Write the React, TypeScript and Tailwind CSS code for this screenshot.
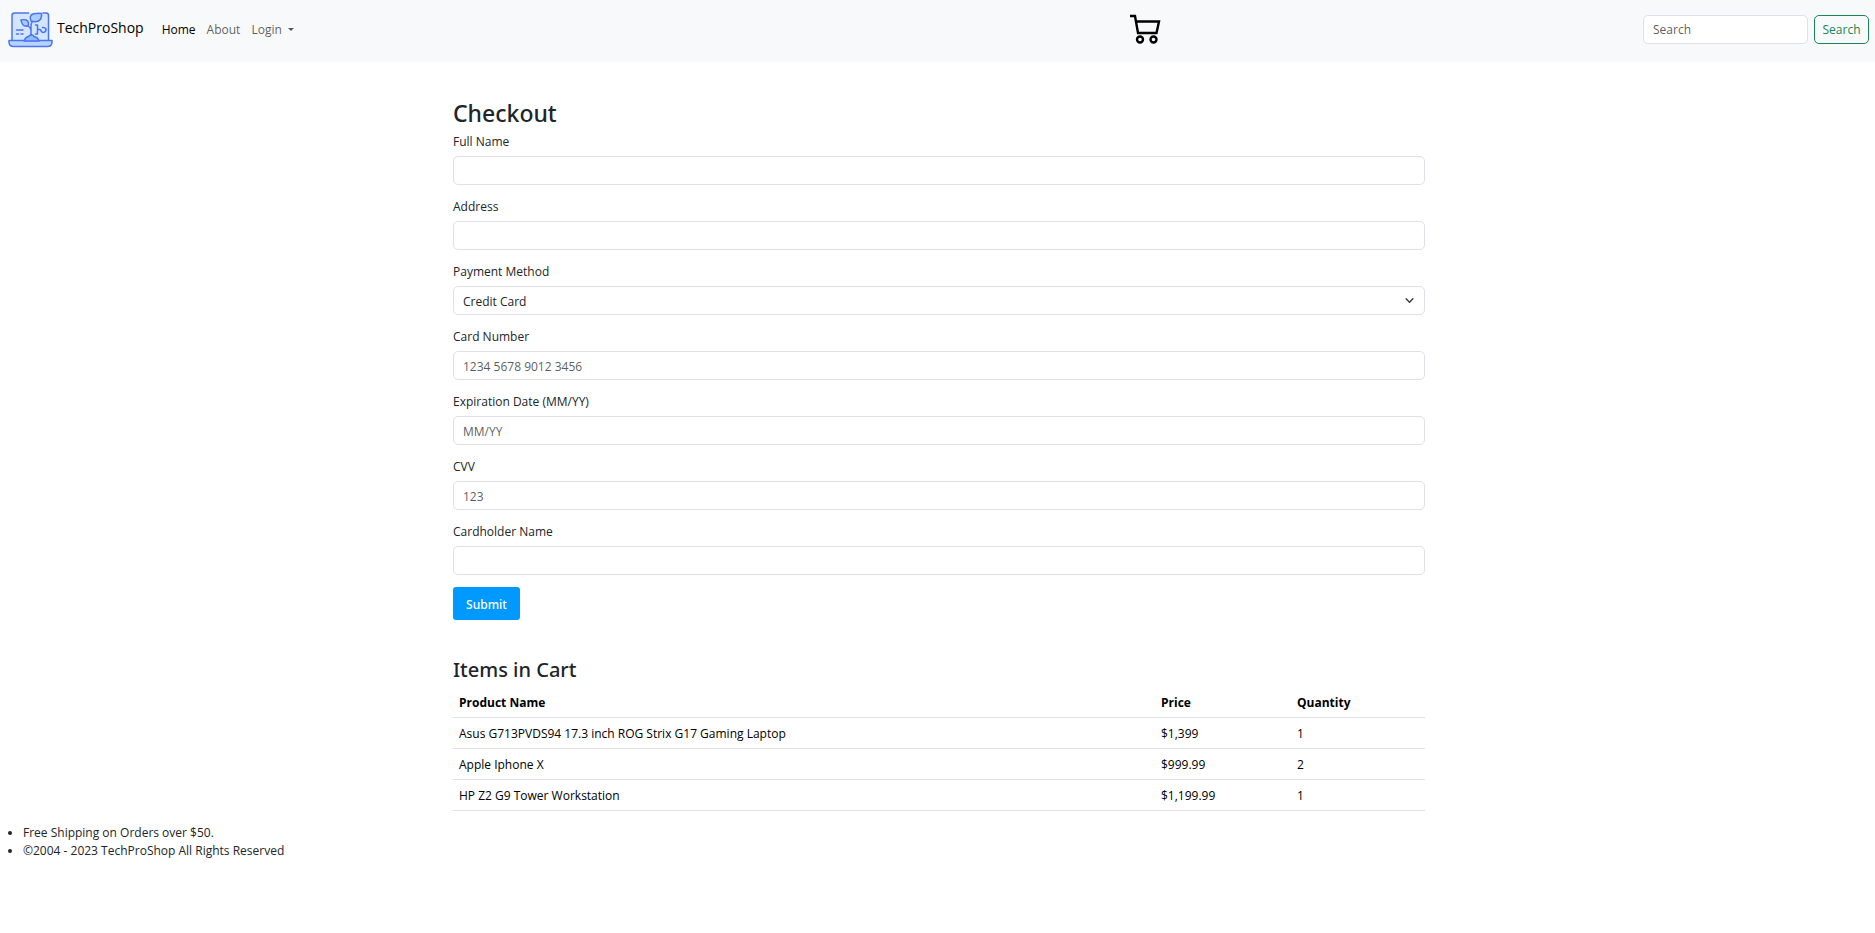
import type { InputHTMLAttributes } from "react";

const cartItems = [
  { name: "Asus G713PVDS94 17.3 inch ROG Strix G17 Gaming Laptop", price: "$1,399", quantity: 1 },
  { name: "Apple Iphone X", price: "$999.99", quantity: 2 },
  { name: "HP Z2 G9 Tower Workstation", price: "$1,199.99", quantity: 1 },
];

function Logo() {
  return (
    <svg width="45" height="36" viewBox="0 0 45 36" fill="none" stroke="#4a73f8" strokeWidth="1.5" strokeLinecap="round" strokeLinejoin="round" aria-hidden="true">
      <path d="M4 28V3.5Q4 1 6.500 1H38Q40.500 1 40.500 3.500V28Z" fill="#d4e6ff" stroke="none" />
      <path d="M1 28.500H44V30Q44 34.500 39.500 34.500H5.500Q1 34.500 1 30Z" fill="#b5d5ff" />
      <path d="M4 28V3.500Q4 1 6.500 1H20.500M35 1H38Q40.500 1 40.500 3.500V28" />
      <path d="M16 29Q17.500 25 20.500 24.500Q23.500 21 26 24.500Q29.500 25 31 29Z" fill="#8ebcff" />
      <path d="M23 23.500V14Q23 10 27 6.500M23 18Q22.500 15.500 19 13" />
      <path d="M23 9Q20.500 3 26 1.800Q30 1 33.500 1.500Q34 7 30.500 9Q27 10.500 23 9Z" fill="#a9ceff" />
      <path d="M19.500 14Q14 15 13 8Q19.500 6.500 20.500 11Q20.700 13 19.500 14Z" fill="#a9ceff" />
      <path d="M27.500 13H29.500V22H27.500M29.500 17.500H32Q33 17.500 33 19Q33.500 20.500 35.500 20.500Q38 20 38 17.500Q37.500 15 34.500 15.500" />
      <path d="M8.500 18H15M8.500 22H10.500M13 22H15" />
    </svg>
  );
}

function CartIcon() {
  return (
    <svg width="32" height="30" viewBox="0 0 32 30" fill="none" stroke="#000" strokeWidth="2.400" aria-hidden="true">
      <path d="M1 2H6L9 19H27.500L30 7.500H7" />
      <circle cx="11" cy="25.500" r="3" />
      <circle cx="24.500" cy="25.500" r="3" />
    </svg>
  );
}

function Field({ id, label, ...rest }: { id: string; label: string } & InputHTMLAttributes<HTMLInputElement>) {
  return (
    <div className="mb-[13px]">
      <label htmlFor={id} className="mb-[5px] block">{label}</label>
      <input id={id} type="text" className="block h-[29px] w-full rounded-[5px] border border-[#dee2e6] bg-white px-[9px] pt-0.5 placeholder:text-[#212529]/75" {...rest} />
    </div>
  );
}

export default function App() {
  return (
    <div className="font-['Open_Sans',sans-serif] text-[12px] leading-[18px] text-[#212529]">
      <nav className="flex h-[62px] items-center bg-[#f8f9fa] pr-1.5 pb-[3px] pl-2">
        <a href="#" className="flex items-center gap-1 text-[14px] leading-[22px] text-black">
          <Logo />
          <span className="pb-1">TechProShop</span>
        </a>
        <div className="ml-[18px] flex gap-[11px]">
          <a href="#" className="text-black">Home</a>
          <a href="#" className="text-black/65">About</a>
          <button type="button" className="flex items-center gap-1.5 text-black/65">
            Login
            <svg width="6" height="3" viewBox="0 0 6 3" aria-hidden="true"><path d="M0 0H6L3 3Z" fill="currentColor" /></svg>
          </button>
        </div>
        <div className="flex-[26]" />
        <a href="#" aria-label="Cart" className="pb-px"><CartIcon /></a>
        <div className="flex-[15]" />
        <form className="flex gap-1.5">
          <input type="search" placeholder="Search" aria-label="Search" className="h-[29px] w-[165px] rounded-[5px] border border-[#dee2e6] bg-white px-[9px] placeholder:text-[#212529]/75" />
          <button type="button" className="h-[29px] w-[55px] rounded-[5px] border border-[#198754] text-[#198754]">Search</button>
        </form>
      </nav>

      <main className="pt-[37px] pl-[3px]">
        <div className="mx-auto max-w-[972px]">
          <h2 className="mb-[5px] font-['Noto_Sans',sans-serif] text-[23px] leading-[29px] font-medium">Checkout</h2>
          <form>
            <Field id="full-name" label="Full Name" />
            <Field id="address" label="Address" />
            <div className="mb-[13px]">
              <label htmlFor="payment" className="mb-[5px] block">Payment Method</label>
              <div className="relative">
                <select id="payment" className="block h-[29px] w-full appearance-none rounded-[5px] border border-[#dee2e6] bg-white px-[9px] pt-0.5">
                  <option>Credit Card</option>
                </select>
                <svg className="pointer-events-none absolute top-2.5 right-[11px]" width="9" height="9" viewBox="0 0 16 16" fill="none" stroke="#343a40" strokeWidth="2.500" strokeLinecap="round" strokeLinejoin="round" aria-hidden="true">
                  <path d="m2 5 6 6 6-6" />
                </svg>
              </div>
            </div>
            <Field id="card-number" label="Card Number" placeholder="1234 5678 9012 3456" />
            <Field id="expiration" label="Expiration Date (MM/YY)" placeholder="MM/YY" />
            <Field id="cvv" label="CVV" placeholder="123" />
            <Field id="cardholder" label="Cardholder Name" />
            <button type="button" className="-mt-px block h-[33px] w-[67px] rounded-[3px] bg-[#0099ff] pt-0.5 font-['Noto_Sans',sans-serif] font-medium text-white">Submit</button>
          </form>

          <h3 className="mt-[37px] mb-[5px] font-['Noto_Sans',sans-serif] text-[20px] leading-[25px] font-medium">Items in Cart</h3>
          <table className="mb-[13px] w-full border-collapse text-left text-black">
            <thead>
              <tr className="border-b border-[#dee2e6]">
                <th className="px-1.5 pt-[7px] pb-[5px] font-bold">Product Name</th>
                <th className="w-[136px] px-1.5 pt-[7px] pb-[5px] font-bold">Price</th>
                <th className="w-[134px] px-1.5 pt-[7px] pb-[5px] font-bold">Quantity</th>
              </tr>
            </thead>
            <tbody>
              {cartItems.map((item) => (
                <tr key={item.name} className="border-b border-[#dee2e6]">
                  <td className="px-1.5 pt-[7px] pb-[5px]">{item.name}</td>
                  <td className="px-1.5 pt-[7px] pb-[5px]">{item.price}</td>
                  <td className="px-1.5 pt-[7px] pb-[5px]">{item.quantity}</td>
                </tr>
              ))}
            </tbody>
          </table>
        </div>
      </main>

      <footer>
        <ul className="list-disc pl-[23px]">
          <li>Free Shipping on Orders over $50.</li>
          <li>©2004 - 2023 TechProShop All Rights Reserved</li>
        </ul>
      </footer>
    </div>
  );
}
